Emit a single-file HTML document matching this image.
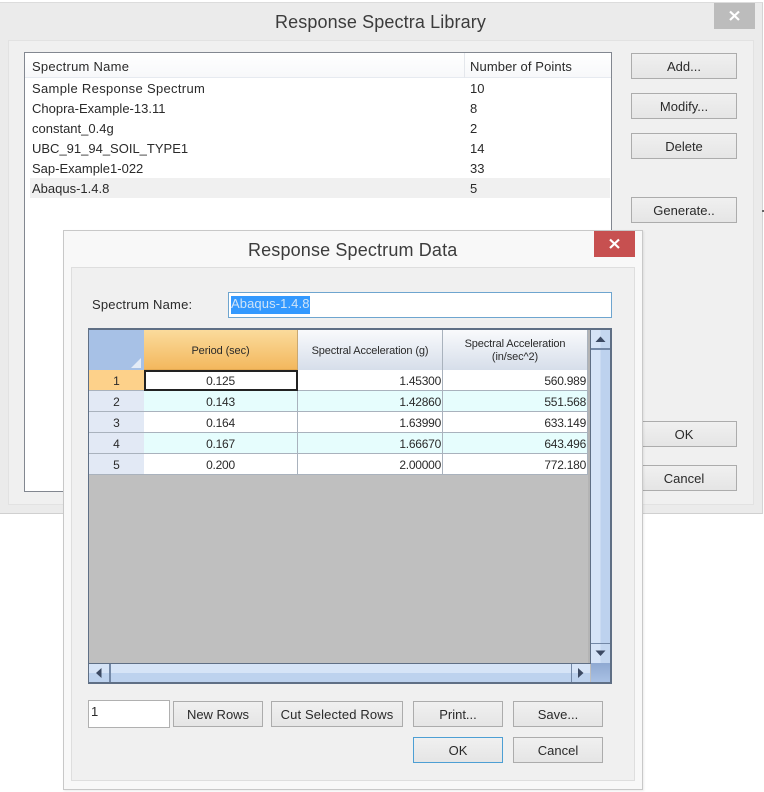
<!DOCTYPE html>
<html>
<head>
<meta charset="utf-8">
<style>
html,body{margin:0;padding:0;background:#fff;}
#p{position:relative;width:764px;height:792px;overflow:hidden;background:#fff;font-family:"Liberation Sans",sans-serif;color:#111;}
#p div{position:absolute;box-sizing:border-box;}
.t{white-space:nowrap;font-size:13px;line-height:20px;height:20px;color:#2a2a2a;}
.b{border:1px solid #acacac;background:linear-gradient(#f0f0f0,#e5e5e5);text-align:center;font-size:13px;color:#2a2a2a;white-space:nowrap;line-height:25px;}
.ttl{font-size:18px;color:#3c3c3c;white-space:nowrap;line-height:24px;}
.c{font-size:12px;letter-spacing:-.25px;color:#2a2a2a;line-height:22px;height:21px;white-space:nowrap;}
.hd{background:linear-gradient(#f9fafc,#d6deea);border-right:1px solid #a9b2bd;text-align:center;font-size:11px;color:#2a2a2a;line-height:13px;letter-spacing:-.12px;}
.rh{background:#e2e9f5;text-align:center;font-size:12px;line-height:22px;color:#2a2a2a;border-bottom:1px solid #a9b2bd;}
.row{height:21px;border-bottom:1px solid #a9b2bd;}
.vl{width:1px;background:#a9b2bd;}
</style>
</head>
<body>
<div id="p">
  <!-- back window -->
  <div style="left:0;top:2px;width:763px;height:512px;background:#ebebeb;border-top:1px solid #dcdcdc;border-right:1px solid #d4d4d4;border-bottom:1px solid #d0d0d0;"></div>
  <div class="ttl" style="left:275px;top:10px;letter-spacing:.12px;">Response Spectra Library</div>
  <div style="left:714px;top:3px;width:41px;height:26px;background:#bcbcbc;"></div>
  <svg style="position:absolute;left:714px;top:3px" width="41" height="26"><path d="M16 8.5L25 17M25 8.5L16 17" stroke="#fff" stroke-width="2.2" fill="none"/></svg>
  <div style="left:8px;top:40px;width:746px;height:465px;background:#f0f0f0;border:1px solid #e2e2e2;"></div>

  <div style="left:24px;top:52px;width:588px;height:440px;background:#fff;border:1px solid #828790;"></div>
  <div style="left:25px;top:53px;width:586px;height:25px;background:linear-gradient(#fff,#f7f8fa);border-bottom:1px solid #e6eaf0;"></div>
  <div style="left:464px;top:53px;width:1px;height:25px;background:#e4e7ec;"></div>
  <div class="t" style="left:32px;top:57px;letter-spacing:.25px;">Spectrum Name</div>
  <div class="t" style="left:470px;top:57px;letter-spacing:.1px;">Number of Points</div>
  <div style="left:30px;top:178px;width:580px;height:20px;background:#f0f0f0;"></div>
  <div class="t" style="left:32px;top:79px;letter-spacing:.32px;">Sample Response Spectrum</div><div class="t" style="left:470px;top:79px;">10</div>
  <div class="t" style="left:32px;top:99px;">Chopra-Example-13.11</div><div class="t" style="left:470px;top:99px;">8</div>
  <div class="t" style="left:32px;top:119px;">constant_0.4g</div><div class="t" style="left:470px;top:119px;">2</div>
  <div class="t" style="left:32px;top:139px;">UBC_91_94_SOIL_TYPE1</div><div class="t" style="left:470px;top:139px;">14</div>
  <div class="t" style="left:32px;top:159px;">Sap-Example1-022</div><div class="t" style="left:470px;top:159px;">33</div>
  <div class="t" style="left:32px;top:179px;">Abaqus-1.4.8</div><div class="t" style="left:470px;top:179px;">5</div>

  <div class="b" style="left:631px;top:53px;width:106px;height:26px;">Add...</div>
  <div class="b" style="left:631px;top:93px;width:106px;height:26px;">Modify...</div>
  <div class="b" style="left:631px;top:133px;width:106px;height:26px;">Delete</div>
  <div class="b" style="left:631px;top:197px;width:106px;height:26px;">Generate..</div>
  <div class="b" style="left:631px;top:421px;width:106px;height:26px;">OK</div>
  <div class="b" style="left:631px;top:465px;width:106px;height:26px;">Cancel</div>
  <div style="left:762px;top:210px;width:2px;height:2px;background:#666;"></div>

  <!-- front window -->
  <div style="left:63px;top:230px;width:580px;height:560px;background:#f8f8f8;border:1px solid #c8c8c8;box-shadow:1px 1px 2px rgba(0,0,0,.08);"></div>
  <div class="ttl" style="left:248px;top:238px;letter-spacing:.15px;">Response Spectrum Data</div>
  <div style="left:594px;top:231px;width:41px;height:26px;background:#c75050;"></div>
  <svg style="position:absolute;left:594px;top:231px" width="41" height="26"><path d="M16 8.5L25 17M25 8.5L16 17" stroke="#fff" stroke-width="2.2" fill="none"/></svg>
  <div style="left:71px;top:267px;width:564px;height:514px;background:#f0f0f0;border:1px solid #dedede;"></div>

  <div class="t" style="left:92px;top:295px;letter-spacing:.2px;">Spectrum Name:</div>
  <div style="left:228px;top:292px;width:384px;height:26px;background:#fff;border:1px solid #6ea5cf;"></div>
  <div style="left:231px;top:296px;width:79px;height:18px;background:#3399ff;"></div>
  <div class="t" style="left:231px;top:294px;color:#cfe4f7;letter-spacing:.1px;">Abaqus-1.4.8</div>

  <!-- grid -->
  <div style="left:88px;top:328px;width:524px;height:356px;background:#bfbfbf;border:2px solid #5f6f85;border-left-width:1px;border-top-width:2px;"></div>
  <div style="left:89px;top:330px;width:500px;height:145px;background:#fff;"></div>
  <div style="left:89px;top:330px;width:55px;height:40px;background:#a7c1e6;"></div>
  <svg style="position:absolute;left:129px;top:356px" width="13" height="13"><path d="M2 12L12 2V12Z" fill="#e4ecf7"/></svg>
  <div style="left:144px;top:330px;width:154px;height:40px;background:linear-gradient(#fbdb9c,#f3b85e);border-right:1px solid #c9a872;border-bottom:1px solid #e3a850;text-align:center;font-size:11px;line-height:42px;color:#2a2a2a;letter-spacing:-.1px;">Period (sec)</div>
  <div class="hd" style="left:298px;top:330px;width:145px;height:40px;line-height:42px;">Spectral Acceleration (g)</div>
  <div class="hd" style="left:443px;top:330px;width:145px;height:40px;padding-top:8px;">Spectral Acceleration<br>(in/sec^2)</div>
  <div style="left:588px;top:330px;width:3px;height:333px;background:#b4b4b4;"></div>

  <div style="left:144px;top:391px;width:444px;height:21px;background:#e6fdfd;"></div>
  <div style="left:144px;top:433px;width:444px;height:21px;background:#e6fdfd;"></div>
  <div class="row" style="left:144px;top:370px;width:444px;"></div>
  <div class="row" style="left:144px;top:391px;width:444px;"></div>
  <div class="row" style="left:144px;top:412px;width:444px;"></div>
  <div class="row" style="left:144px;top:433px;width:444px;"></div>
  <div class="row" style="left:144px;top:454px;width:444px;"></div>
  <div class="vl" style="left:297px;top:370px;height:105px;"></div>
  <div class="vl" style="left:442px;top:370px;height:105px;"></div>
  <div class="vl" style="left:587px;top:330px;height:145px;"></div>

  <div class="rh" style="left:89px;top:370px;width:55px;height:21px;background:#fdd18a;">1</div>
  <div class="rh" style="left:89px;top:391px;width:55px;height:21px;">2</div>
  <div class="rh" style="left:89px;top:412px;width:55px;height:21px;">3</div>
  <div class="rh" style="left:89px;top:433px;width:55px;height:21px;">4</div>
  <div class="rh" style="left:89px;top:454px;width:55px;height:21px;">5</div>

  <div style="left:144px;top:370px;width:154px;height:21px;border:2px solid #222;background:#fff;"></div>

  <div class="c" style="left:144px;top:370px;width:153px;text-align:center;">0.125</div>
  <div class="c" style="left:144px;top:391px;width:153px;text-align:center;">0.143</div>
  <div class="c" style="left:144px;top:412px;width:153px;text-align:center;">0.164</div>
  <div class="c" style="left:144px;top:433px;width:153px;text-align:center;">0.167</div>
  <div class="c" style="left:144px;top:454px;width:153px;text-align:center;">0.200</div>

  <div class="c" style="left:298px;top:370px;width:143px;text-align:right;">1.45300</div>
  <div class="c" style="left:298px;top:391px;width:143px;text-align:right;">1.42860</div>
  <div class="c" style="left:298px;top:412px;width:143px;text-align:right;">1.63990</div>
  <div class="c" style="left:298px;top:433px;width:143px;text-align:right;">1.66670</div>
  <div class="c" style="left:298px;top:454px;width:143px;text-align:right;">2.00000</div>

  <div class="c" style="left:443px;top:370px;width:143px;text-align:right;">560.989</div>
  <div class="c" style="left:443px;top:391px;width:143px;text-align:right;">551.568</div>
  <div class="c" style="left:443px;top:412px;width:143px;text-align:right;">633.149</div>
  <div class="c" style="left:443px;top:433px;width:143px;text-align:right;">643.496</div>
  <div class="c" style="left:443px;top:454px;width:143px;text-align:right;">772.180</div>

  <!-- vertical scrollbar -->
  <div style="left:591px;top:330px;width:19px;height:333px;background:linear-gradient(90deg,#d6e4f7 50%,#bdd2ee 50%);"></div>
  <div style="left:590px;top:330px;width:1px;height:334px;background:#5f6f85;"></div>
  <div style="left:591px;top:330px;width:19px;height:20px;background:linear-gradient(90deg,#d6e4f7 50%,#c4d7f0 50%);border-bottom:2px solid #7388a6;"></div>
  <svg style="position:absolute;left:591px;top:330px" width="19" height="20"><path d="M4.5 12L9.5 6.5L14.5 12Z" fill="#3c4a63"/></svg>
  <div style="left:591px;top:643px;width:19px;height:20px;background:linear-gradient(90deg,#d6e4f7 50%,#c4d7f0 50%);border-top:1px solid #7388a6;"></div>
  <svg style="position:absolute;left:591px;top:643px" width="19" height="20"><path d="M4.5 7.5L9.5 13L14.5 7.5Z" fill="#3c4a63"/></svg>

  <!-- horizontal scrollbar -->
  <div style="left:89px;top:663px;width:521px;height:1px;background:#5f6f85;"></div>
  <div style="left:89px;top:664px;width:501px;height:18px;background:linear-gradient(#d6e4f7 50%,#bdd2ee 50%);"></div>
  <div style="left:109px;top:664px;width:2px;height:18px;background:#7388a6;"></div>
  <svg style="position:absolute;left:89px;top:664px" width="20" height="18"><path d="M12.5 4L7 9L12.5 14Z" fill="#3c4a63"/></svg>
  <div style="left:571px;top:664px;width:1px;height:18px;background:#7388a6;"></div>
  <svg style="position:absolute;left:571px;top:664px" width="20" height="18"><path d="M7 4L12.5 9L7 14Z" fill="#3c4a63"/></svg>
  <div style="left:591px;top:663px;width:19px;height:19px;background:linear-gradient(#8fa9d1,#a9c1e4);"></div>

  <!-- bottom controls -->
  <div style="left:88px;top:700px;width:82px;height:28px;background:#fff;border:1px solid #b0b0b0;"></div>
  <div class="t" style="left:91px;top:702px;">1</div>
  <div class="b" style="left:173px;top:701px;width:90px;height:26px;">New Rows</div>
  <div class="b" style="left:271px;top:701px;width:132px;height:26px;letter-spacing:.13px;">Cut Selected Rows</div>
  <div class="b" style="left:413px;top:701px;width:90px;height:26px;">Print...</div>
  <div class="b" style="left:513px;top:701px;width:90px;height:26px;">Save...</div>
  <div class="b" style="left:413px;top:737px;width:90px;height:26px;border-color:#4d9fd4;">OK</div>
  <div class="b" style="left:513px;top:737px;width:90px;height:26px;">Cancel</div>
</div>
</body>
</html>
